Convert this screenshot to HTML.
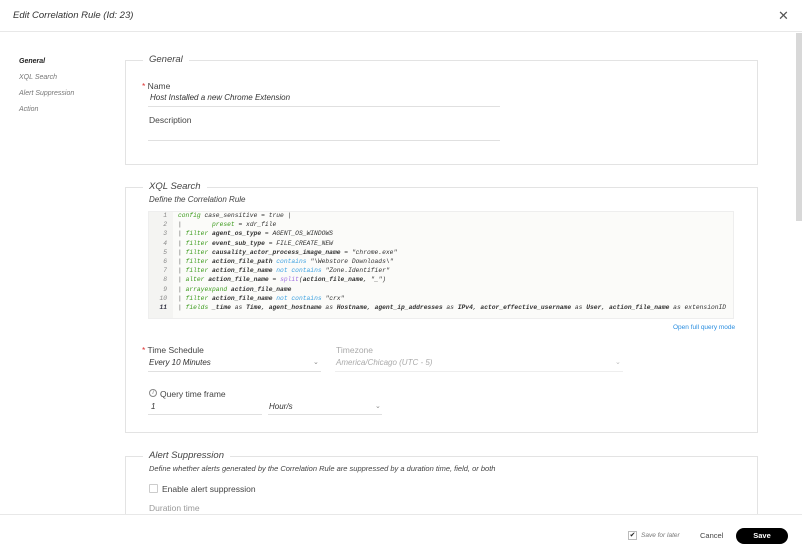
<!DOCTYPE html>
<html style="width:802px;height:553px;overflow:hidden"><head><meta charset="utf-8"><style>
*{box-sizing:border-box;margin:0;padding:0}
body{width:802px;height:553px;overflow:hidden;background:#fff;font-family:"Liberation Sans",sans-serif;color:#333;position:relative}
.abs{position:absolute}
.i{font-style:italic}
.hdr{left:0;top:0;width:802px;height:32px;border-bottom:1px solid #e8e8e8}
.box{border:1px solid #e3e3e3;background:#fff}
.legend{background:#fff;padding:0 6px;font-size:9.5px;font-style:italic;color:#444}
.lbl{font-size:8.5px;color:#444}
.val{font-size:8px;font-style:italic;color:#333}
.line{height:1px;background:#e0e0e0}
.code{font-family:"Liberation Mono",monospace;font-size:6.3px;font-style:italic;line-height:9.2px;color:#333;white-space:pre}
.g{color:#3a9a1a}.b{color:#3aa0e0}.p{color:#a070e0}.s{color:#555}
.nav{font-size:7px;font-style:italic;color:#777}
</style></head><body>
<div class="abs hdr"></div>
<div class="abs i" style="left:13px;top:10px;font-size:9.5px;color:#333">Edit Correlation Rule (Id: 23)</div>
<div class="abs" style="left:778px;top:8px;font-size:13px;color:#555">✕</div>

<div class="abs nav" style="left:19px;top:58px;color:#222;font-weight:bold">General</div>
<div class="abs nav" style="left:19px;top:74px">XQL Search</div>
<div class="abs nav" style="left:19px;top:90px">Alert Suppression</div>
<div class="abs nav" style="left:19px;top:106px">Action</div>

<div class="abs" style="left:796px;top:33px;width:6px;height:188px;background:#d8d8d8"></div>

<div class="abs box" style="left:125px;top:60px;width:633px;height:105px"></div>
<div class="abs legend" style="left:143px;top:54px">General</div>
<div class="abs lbl" style="left:142px;top:81px"><span style="color:#d33">*</span> Name</div>
<div class="abs val" style="left:150px;top:93px">Host Installed a new Chrome Extension</div>
<div class="abs line" style="left:148px;top:106px;width:352px"></div>
<div class="abs lbl" style="left:149px;top:115px">Description</div>
<div class="abs line" style="left:148px;top:140px;width:352px"></div>

<div class="abs box" style="left:125px;top:187px;width:633px;height:246px"></div>
<div class="abs legend" style="left:143px;top:181px">XQL Search</div>
<div class="abs i" style="left:149px;top:195px;font-size:8px;color:#444">Define the Correlation Rule</div>
<div class="abs" style="left:148px;top:211px;width:586px;height:108px;background:#fbfbf9;border:1px solid #eee"></div>
<div class="abs" style="left:149px;top:212px;width:24px;height:106px;background:#f4f4f2"></div>
<div class="abs code" style="left:149px;top:211px;width:18px;text-align:right;color:#888">1
2
3
4
5
6
7
8
9
10
<b style="color:#334">11</b></div>
<div class="abs code" style="left:178px;top:211px"><span class="g">config</span> case_sensitive = true |
<span class="s">|      </span>  <span class="g">preset</span> = xdr_file
<span class="s">|</span> <span class="g">filter</span> <b>agent_os_type</b> = AGENT_OS_WINDOWS
<span class="s">|</span> <span class="g">filter</span> <b>event_sub_type</b> = FILE_CREATE_NEW
<span class="s">|</span> <span class="g">filter</span> <b>causality_actor_process_image_name</b> = "chrome.exe"
<span class="s">|</span> <span class="g">filter</span> <b>action_file_path</b> <span class="b">contains</span> "\Webstore Downloads\"
<span class="s">|</span> <span class="g">filter</span> <b>action_file_name</b> <span class="b">not contains</span> "Zone.Identifier"
<span class="s">|</span> <span class="g">alter</span> <b>action_file_name</b> = <span class="p">split</span>(<b>action_file_name</b>, "_")
<span class="s">|</span> <span class="g">arrayexpand</span> <b>action_file_name</b>
<span class="s">|</span> <span class="g">filter</span> <b>action_file_name</b> <span class="b">not contains</span> "crx"
<span class="s">|</span> <span class="g">fields</span> <b>_time</b> as <b>Time</b>, <b>agent_hostname</b> as <b>Hostname</b>, <b>agent_ip_addresses</b> as <b>IPv4</b>, <b>actor_effective_username</b> as <b>User</b>, <b>action_file_name</b> as extensionID</div>
<div class="abs" style="left:673px;top:324px;font-size:6.5px;color:#2a8ee0">Open full query mode</div>

<div class="abs lbl" style="left:142px;top:345px"><span style="color:#d33">*</span> Time Schedule</div>
<div class="abs val" style="left:149px;top:358px">Every 10 Minutes</div>
<div class="abs" style="left:313px;top:358px;font-size:7px;color:#888">⌄</div>
<div class="abs line" style="left:148px;top:371px;width:173px"></div>
<div class="abs lbl" style="left:336px;top:345px;color:#aaa">Timezone</div>
<div class="abs val" style="left:336px;top:358px;color:#aaa">America/Chicago (UTC - 5)</div>
<div class="abs" style="left:615px;top:358px;font-size:7px;color:#bbb">⌄</div>
<div class="abs line" style="left:335px;top:371px;width:288px;background:#eee"></div>

<div class="abs" style="left:149px;top:389px;width:8px;height:8px;border:1px solid #888;border-radius:50%;font-size:5px;text-align:center;line-height:6px;color:#666;font-style:italic">i</div>
<div class="abs lbl" style="left:160px;top:389px">Query time frame</div>
<div class="abs val" style="left:151px;top:402px">1</div>
<div class="abs line" style="left:148px;top:414px;width:114px"></div>
<div class="abs val" style="left:269px;top:402px">Hour/s</div>
<div class="abs" style="left:375px;top:402px;font-size:7px;color:#888">⌄</div>
<div class="abs line" style="left:268px;top:414px;width:114px"></div>

<div class="abs box" style="left:125px;top:456px;width:633px;height:97px;border-bottom:none"></div>
<div class="abs legend" style="left:143px;top:450px">Alert Suppression</div>
<div class="abs i" style="left:149px;top:464px;font-size:7.5px;color:#444">Define whether alerts generated by the Correlation Rule are suppressed by a duration time, field, or both</div>
<div class="abs" style="left:149px;top:484px;width:9px;height:9px;border:1px solid #ccc;border-radius:1px"></div>
<div class="abs lbl" style="left:162px;top:484px">Enable alert suppression</div>
<div class="abs lbl" style="left:149px;top:503px;color:#999">Duration time</div>

<div class="abs" style="left:0;top:514px;width:802px;height:39px;background:#fff;border-top:1px solid #e8e8e8"></div>
<div class="abs" style="left:628px;top:531px;width:9px;height:9px;border:1px solid #bbb;font-size:7px;line-height:8px;text-align:center;color:#222">✔</div>
<div class="abs i" style="left:641px;top:532px;font-size:6.5px;color:#777">Save for later</div>
<div class="abs" style="left:700px;top:531px;font-size:7.5px;color:#444">Cancel</div>
<div class="abs" style="left:736px;top:528px;width:52px;height:16px;background:#000;border-radius:8px;color:#fff;font-size:7.5px;font-weight:bold;text-align:center;line-height:16px">Save</div>
</body></html>
